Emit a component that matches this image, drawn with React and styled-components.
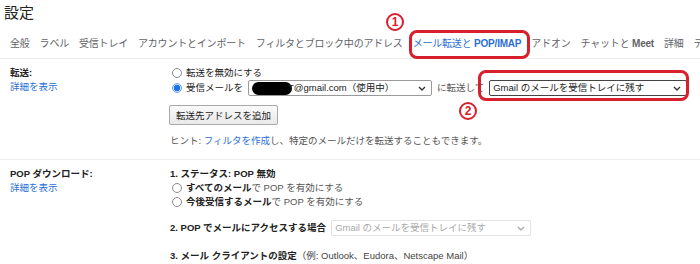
import styled, { createGlobalStyle } from "styled-components";

const GlobalStyle = createGlobalStyle`
  body {
    margin: 0;
    background: #fff;
    font-family: "Liberation Sans", "Noto Sans CJK JP", sans-serif;
    color: #222;
  }
`;

const Page = styled.div`
  position: relative;
  width: 700px;
  height: 264px;
  overflow: hidden;
  font-size: 9.5px;
`;

const Title = styled.h1`
  margin: 0;
  padding: 3px 0 0 4px;
  height: 27px;
  box-sizing: border-box;
  font-size: 15px;
  font-weight: normal;
  line-height: 20px;
  color: #222;
`;

const Tabs = styled.nav`
  display: flex;
  align-items: center;
  gap: 10px;
  height: 31px;
  padding-left: 10px;
  border-bottom: 1px solid #ececec;
  white-space: nowrap;
`;

const Tab = styled.span`
  font-size: 10px;
  letter-spacing: -0.2px;
  color: ${(p) => (p.$active ? "#2b6fd8" : "#5f6368")};
  b {
    font-weight: bold;
  }
`;

const Section = styled.section`
  display: grid;
  grid-template-columns: 170px 1fr;
  padding: ${(p) => p.$pad};
  border-bottom: ${(p) => (p.$last ? "none" : "1px solid #eeeeee")};
`;

const Label = styled.div`
  padding-left: 10px;
  line-height: 14px;
  b {
    display: block;
    color: #222;
  }
`;

const Link = styled.a`
  color: #2b6fd8;
  text-decoration: none;
`;

const Body = styled.div`
  display: flex;
  flex-direction: column;
  align-items: flex-start;
`;

const Row = styled.div`
  display: flex;
  align-items: center;
  gap: 5px;
  min-height: 14px;
  line-height: 14px;
  margin-top: ${(p) => p.$mt || 0}px;
  color: ${(p) => p.$color || "#222"};
  white-space: nowrap;
`;

const Muted = styled.span`
  color: ${(p) => p.$color || "#555"};
`;

const Radio = styled.span`
  width: 8px;
  height: 8px;
  margin: 0 -1px 0 2px;
  border-radius: 50%;
  border: 1px solid ${(p) => (p.$checked ? "#6ea2ee" : "#8a8a8a")};
  background: ${(p) =>
    p.$checked ? "radial-gradient(circle, #1a73e8 0 3px, #d6e4fb 3.5px)" : "#fff"};
  flex: none;
`;

const Select = styled.div`
  display: flex;
  align-items: center;
  justify-content: space-between;
  box-sizing: border-box;
  width: ${(p) => p.$w}px;
  height: 16px;
  padding: 0 5px 0 3px;
  border: 1px solid ${(p) => p.$border};
  border-radius: 2px;
  background: #fff;
  color: ${(p) => (p.$disabled ? "#a8a8a8" : "#222")};
`;

const Redacted = styled.span`
  display: inline-block;
  width: 40px;
  height: 13px;
  margin-right: -4px;
  border-radius: 7px;
  background: #000;
  vertical-align: middle;
`;

const Button = styled.button`
  height: 20px;
  margin: 9px 0 0 -1px;
  padding: 0 6px;
  border: 1px solid #a9a9a9;
  border-radius: 2px;
  background: linear-gradient(#fafafa, #e9e9e9);
  font-family: inherit;
  font-size: 9.5px;
  color: #222;
`;

const Marker = styled.div`
  position: absolute;
  left: ${(p) => p.$x}px;
  top: ${(p) => p.$y}px;
  width: ${(p) => p.$w}px;
  height: ${(p) => p.$h}px;
  border: 3px solid #d8202c;
  border-radius: 8px;
  box-sizing: border-box;
`;

const Badge = styled.div`
  position: absolute;
  left: ${(p) => p.$x}px;
  top: ${(p) => p.$y}px;
  width: 18px;
  height: 18px;
  box-sizing: border-box;
  border: 2px solid #d8202c;
  border-radius: 50%;
  display: flex;
  align-items: center;
  justify-content: center;
  color: #d8202c;
  font-size: 12px;
  font-weight: bold;
  line-height: 1;
`;

const Chevron = ({ color = "#333" }) => (
  <svg width="8" height="5" viewBox="0 0 8 5">
    <path d="M1 1l3 3 3-3" fill="none" stroke={color} strokeWidth="1.4" />
  </svg>
);

const tabs = [
  { label: "全般" },
  { label: "ラベル" },
  { label: "受信トレイ" },
  { label: "アカウントとインポート" },
  { label: "フィルタとブロック中のアドレス" },
  { label: "メール転送と ", latin: "POP/IMAP", active: true },
  { label: "アドオン" },
  { label: "チャットと ", latin: "Meet" },
  { label: "詳細" },
  { label: "テ" },
];

export default function App() {
  return (
    <Page>
      <GlobalStyle />
      <Title>設定</Title>
      <Tabs>
        {tabs.map((t) => (
          <Tab key={t.label} $active={t.active}>
            {t.label}
            {t.latin && <b>{t.latin}</b>}
          </Tab>
        ))}
      </Tabs>

      <Section $pad="7px 0 11px">
        <Label>
          <b>転送:</b>
          <Link href="#">詳細を表示</Link>
        </Label>
        <Body>
          <Row>
            <Radio />
            転送を無効にする
          </Row>
          <Row>
            <Radio $checked />
            受信メールを
            <Select $w={184} $border="#9a9a9a">
              <span>
                <Redacted />
                T@gmail.com（使用中）
              </span>
              <Chevron />
            </Select>
            <Muted>に転送して</Muted>
            <Select $w={198} $border="#444">
              <span>Gmail のメールを受信トレイに残す</span>
              <Chevron />
            </Select>
          </Row>
          <Button>転送先アドレスを追加</Button>
          <Row $mt={9} $color="#555">
            <span>
              ヒント: <Link href="#">フィルタを作成</Link>し、特定のメールだけを転送することもできます。
            </span>
          </Row>
        </Body>
      </Section>

      <Section $pad="7px 0 0" $last>
        <Label>
          <b>POP ダウンロード:</b>
          <Link href="#">詳細を表示</Link>
        </Label>
        <Body>
          <Row>
            <b>1. ステータス: POP 無効</b>
          </Row>
          <Row>
            <Radio />
            <span>
              <b>すべてのメール</b>
              <Muted>で POP を有効にする</Muted>
            </span>
          </Row>
          <Row>
            <Radio />
            <span>
              <b>今後受信するメール</b>
              <Muted>で POP を有効にする</Muted>
            </span>
          </Row>
          <Row $mt={11}>
            <b>2. POP でメールにアクセスする場合</b>
            <Select $w={200} $border="#e2e2e2" $disabled>
              <span>Gmail のメールを受信トレイに残す</span>
              <Chevron color="#aaa" />
            </Select>
          </Row>
          <Row $mt={13}>
            <span>
              <b>3. メール クライアントの設定</b>
              <Muted $color="#444">（例: Outlook、Eudora、Netscape Mail）</Muted>
            </span>
          </Row>
        </Body>
      </Section>

      <Marker $x={409} $y={30} $w={121} $h={29} />
      <Badge $x={386} $y={13}>1</Badge>
      <Marker $x={478} $y={70} $w={211} $h={31} />
      <Badge $x={459} $y={102}>2</Badge>
    </Page>
  );
}
